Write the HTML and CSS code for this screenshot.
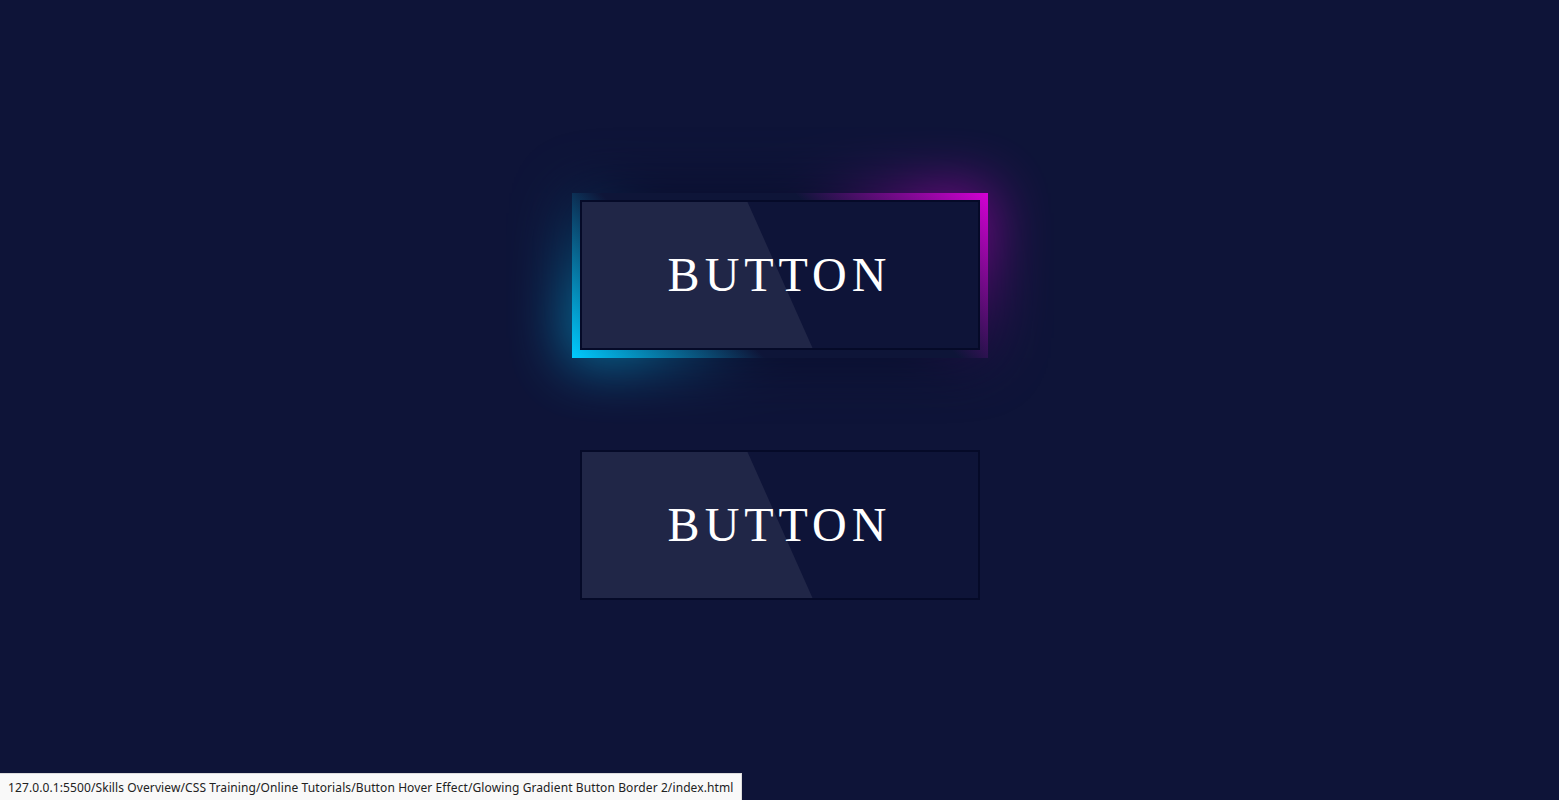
FILE: index.html
```html
<!DOCTYPE html>
<html lang="en">
<head>
<meta charset="utf-8">
<title>Glowing Gradient Button Border 2</title>
<link rel="stylesheet" href="styles.css">
</head>
<body>
<main class="stage">
  <a class="btn glow" href="#">
    <span class="face"><span class="shine"></span><span class="label">BUTTON</span></span>
  </a>
  <a class="btn" href="#">
    <span class="face"><span class="shine"></span><span class="label">BUTTON</span></span>
  </a>
</main>
<div class="status">127.0.0.1:5500/Skills Overview/CSS Training/Online Tutorials/Button Hover Effect/Glowing Gradient Button Border 2/index.html</div>
</body>
</html>
```
FILE: styles.css
```css
html, body {
  margin: 0;
  padding: 0;
}
body {
  background: #0e1438;
  min-height: 100vh;
}
.stage {
  min-height: 100vh;
  display: flex;
  flex-direction: column;
  align-items: center;
  justify-content: center;
  gap: 100px;
}
.btn {
  position: relative;
  display: block;
  width: 400px;
  height: 150px;
  text-decoration: none;
  isolation: isolate;
}
.glow::before,
.glow::after {
  content: '';
  position: absolute;
  top: -7px;
  left: -8px;
  right: -8px;
  bottom: -8px;
  background: linear-gradient(45deg, #00ccff, #0e1538, #0e1538, #d400d4);
}
.glow::before {
  z-index: 1;
}
.glow::after {
  z-index: 0;
  filter: blur(30px);
  background: linear-gradient(45deg, #00ccff, #080d2c, #080d2c, #d400d4);
  opacity: 0.9;
}
.face {
  position: relative;
  z-index: 2;
  display: flex;
  align-items: center;
  justify-content: center;
  box-sizing: border-box;
  height: 100%;
  border: 2px solid #050a28;
  background: #0e1438;
  overflow: hidden;
}
.shine {
  position: absolute;
  top: 0;
  left: -50%;
  width: 100%;
  height: 100%;
  background: rgba(255, 255, 255, 0.08);
  transform: skewX(24deg);
}
.label {
  position: relative;
  font-family: "Liberation Serif", "Times New Roman", serif;
  font-size: 48px;
  letter-spacing: 5px;
  color: #fff;
  line-height: 1;
}
.status {
  position: fixed;
  left: 0;
  bottom: 0;
  box-sizing: border-box;
  height: 27px;
  padding: 0 8px;
  display: flex;
  align-items: center;
  background: #f9f9f9;
  border-top: 1px solid #dcdcdc;
  border-right: 1px solid #dcdcdc;
  color: #222;
  font-family: "Noto Sans", "Open Sans", sans-serif;
  font-size: 12px;
  letter-spacing: 0.1px;
  white-space: nowrap;
}
```
